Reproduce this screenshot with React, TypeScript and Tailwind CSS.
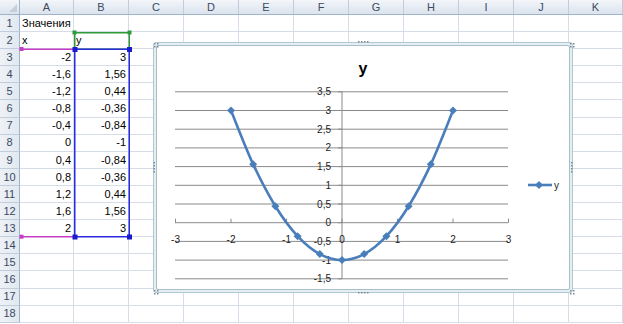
import React from "react";

const COLS = ["A", "B", "C", "D", "E", "F", "G", "H", "I", "J", "K"];
const XS = [-2, -1.6, -1.2, -0.8, -0.4, 0, 0.4, 0.8, 1.2, 1.6, 2];
const fmt = (n: number) => {
  const r = Math.round(n * 100) / 100;
  return String(r).replace(".", ",");
};

type Cell = { t: string; right?: boolean };
const rowsData: Cell[][] = [];
rowsData.push([{ t: "Значения" }, { t: "" }]);
rowsData.push([{ t: "x" }, { t: "y" }]);
XS.forEach((x) => rowsData.push([{ t: fmt(x), right: true }, { t: fmt(x * x - 1), right: true }]));
while (rowsData.length < 18) rowsData.push([{ t: "" }, { t: "" }]);

const widthClass = (i: number) => (i === 0 ? "w-[54px]" : i === 10 ? "flex-1" : "w-[55px]");

const px = (u: number) => 342 + u * 55.5;
const py = (v: number) => 222.7 - v * 37.4;

function smoothPath(pts: [number, number][]) {
  let d = `M${pts[0][0]},${pts[0][1]}`;
  for (let i = 0; i < pts.length - 1; i++) {
    const p0 = pts[i - 1] || pts[i];
    const p1 = pts[i];
    const p2 = pts[i + 1];
    const p3 = pts[i + 2] || p2;
    const c1x = p1[0] + (p2[0] - p0[0]) / 6;
    const c1y = p1[1] + (p2[1] - p0[1]) / 6;
    const c2x = p2[0] - (p3[0] - p1[0]) / 6;
    const c2y = p2[1] - (p3[1] - p1[1]) / 6;
    d += ` C${c1x},${c1y} ${c2x},${c2y} ${p2[0]},${p2[1]}`;
  }
  return d;
}

const Diamond = ({ x, y }: { x: number; y: number }) => (
  <polygon points={`${x},${y - 4} ${x + 4},${y} ${x},${y + 4} ${x - 4},${y}`} fill="#4a7ebb" />
);

function Chart() {
  const pts: [number, number][] = XS.map((x) => [px(x), py(x * x - 1)]);
  const yTicks = [3.5, 3, 2.5, 2, 1.5, 1, 0.5, 0, -0.5, -1, -1.5];
  const xTicks = [-3, -2, -1, 0, 1, 2, 3];
  const dots = [0, 3, 6, 9];
  return (
    <div className="absolute left-[153px] top-[42px] w-[420px] h-[251px] rounded-[3px] border border-[#b3c7d2] bg-[#e4eef3] p-[2px]">
      <div className="relative w-full h-full bg-white border border-[#a9bdc9] rounded-[2px]">
        <svg width={420} height={251} className="absolute left-[-4px] top-[-4px] overflow-visible">
          <g transform="translate(-153,-42)" fontFamily="'Liberation Sans', Arial, sans-serif">
            {yTicks.map((v) => (
              <line key={v} x1={175} x2={508} y1={py(v)} y2={py(v)} stroke="#8a8a8a" strokeWidth={1} />
            ))}
            <line x1={342} x2={342} y1={py(3.5)} y2={py(-1.5)} stroke="#8a8a8a" strokeWidth={1} />
            {yTicks.map((v) => (
              <line key={"t" + v} x1={338} x2={342} y1={py(v)} y2={py(v)} stroke="#8a8a8a" strokeWidth={1} />
            ))}
            {xTicks.map((u) => (
              <line key={"x" + u} x1={px(u)} x2={px(u)} y1={py(0) - 4} y2={py(0)} stroke="#8a8a8a" strokeWidth={1} />
            ))}
            {yTicks.map((v) => (
              <text key={"l" + v} x={331} y={py(v) + 3.5} fontSize={10} textAnchor="end" fill="#222">
                {fmt(v)}
              </text>
            ))}
            {xTicks.map((u) => (
              <text key={"xl" + u} x={px(u)} y={py(0) + 20} fontSize={10} textAnchor="middle" fill="#222">
                {fmt(u)}
              </text>
            ))}
            <path d={smoothPath(pts)} fill="none" stroke="#4a7ebb" strokeWidth={2.6} strokeLinejoin="round" />
            {pts.map((p, i) => (
              <Diamond key={i} x={p[0]} y={p[1]} />
            ))}
            <text x={363} y={73.5} fontSize={16} fontWeight="bold" textAnchor="middle" fill="#000">
              y
            </text>
            <line x1={528} x2={552} y1={185} y2={185} stroke="#4a7ebb" strokeWidth={2.6} />
            <Diamond x={539} y={185} />
            <text x={554} y={188.5} fontSize={10} fill="#222">
              y
            </text>
            <g fill="#7a8a92">
              {dots.map((d) => (
                <rect key={"ht" + d} x={358 + d} y={41} width={1.5} height={1.5} />
              ))}
              {dots.map((d) => (
                <rect key={"hb" + d} x={358 + d} y={292} width={1.5} height={1.5} />
              ))}
              {dots.map((d) => (
                <rect key={"hl" + d} x={153.5} y={162 + d} width={1.5} height={1.5} />
              ))}
              {dots.map((d) => (
                <rect key={"hr" + d} x={571} y={162 + d} width={1.5} height={1.5} />
              ))}
              {[
                [154, 43],
                [570, 43],
                [154, 290],
                [570, 290],
              ].map(([cx, cy], i) => (
                <g key={"c" + i}>
                  <rect x={cx} y={cy} width={1.5} height={1.5} />
                  <rect x={cx + 3} y={cy} width={1.5} height={1.5} />
                  <rect x={cx} y={cy + 3} width={1.5} height={1.5} />
                  <rect x={cx + 3} y={cy + 3} width={1.5} height={1.5} />
                </g>
              ))}
            </g>
          </g>
        </svg>
      </div>
    </div>
  );
}

function Selections() {
  return (
    <svg width={623} height={324} className="absolute inset-0 pointer-events-none">
      {/* green: B2 */}
      <rect x={74.75} y={32.75} width={54.5} height={16.5} fill="none" stroke="#2f9a3a" strokeWidth={1.5} />
      <rect x={72.5} y={30.5} width={4} height={4} fill="#2f9a3a" />
      <rect x={127.5} y={30.5} width={4} height={4} fill="#2f9a3a" />
      {/* magenta: A3:A13 */}
      <rect x={20} y={48.5} width={54} height={1.5} fill="#c53ec5" />
      <rect x={20} y={236} width={54} height={1.5} fill="#c53ec5" />
      <rect x={19.5} y={47} width={4} height={4} fill="#c53ec5" />
      <rect x={19.5} y={234.7} width={4} height={4} fill="#c53ec5" />
      {/* blue: B3:B13 */}
      <rect x={74.75} y={49.25} width={54.5} height={187.5} fill="none" stroke="#2a2ae0" strokeWidth={1.5} />
      <rect x={72.5} y={47} width={5} height={5} fill="#1a1ad0" />
      <rect x={127} y={47} width={5} height={5} fill="#1a1ad0" />
      <rect x={72.5} y={234.5} width={5} height={5} fill="#1a1ad0" />
      <rect x={127} y={234.5} width={5} height={5} fill="#1a1ad0" />
    </svg>
  );
}

export default function App() {
  return (
    <div
      className="relative w-[623px] h-[324px] overflow-hidden bg-white text-[11px] text-black"
      style={{ fontFamily: "'Liberation Sans', Arial, sans-serif" }}
    >
      <div className="flex h-[15px] bg-gradient-to-b from-[#f3f6fa] to-[#dbe3ed] border-b border-[#9fb4cc]">
        <div className="w-[20px] shrink-0 flex items-end justify-end p-[2px] border-r border-[#9fb4cc]">
          <div className="w-0 h-0 border-l-[8px] border-l-transparent border-b-[8px] border-b-[#c6cfd9]" />
        </div>
        {COLS.map((c, i) => (
          <div
            key={c}
            className={`${widthClass(i)} shrink-0 flex items-center justify-center border-r border-[#c2cddb] text-[#3b4a5e] text-[11px] leading-none`}
          >
            {c}
          </div>
        ))}
      </div>
      {rowsData.map((row, r) => (
        <div key={r} className="flex h-[17.1px]">
          <div className="w-[20px] shrink-0 flex items-center justify-center bg-gradient-to-r from-[#eef2f7] to-[#e1e8f0] border-r border-[#9fb4cc] border-b border-b-[#c2cddb] text-[#3b4a5e] text-[11px]">
            {r + 1}
          </div>
          {COLS.map((c, i) => {
            const cell = i < 2 ? row[i] : undefined;
            return (
              <div
                key={c}
                className={`${widthClass(i)} shrink-0 flex items-center border-r border-b border-[#d6dde8] px-[2px] whitespace-nowrap overflow-visible ${
                  cell?.right ? "justify-end" : "justify-start"
                }`}
              >
                {cell?.t}
              </div>
            );
          })}
        </div>
      ))}

      <Selections />
      <Chart />
    </div>
  );
}
